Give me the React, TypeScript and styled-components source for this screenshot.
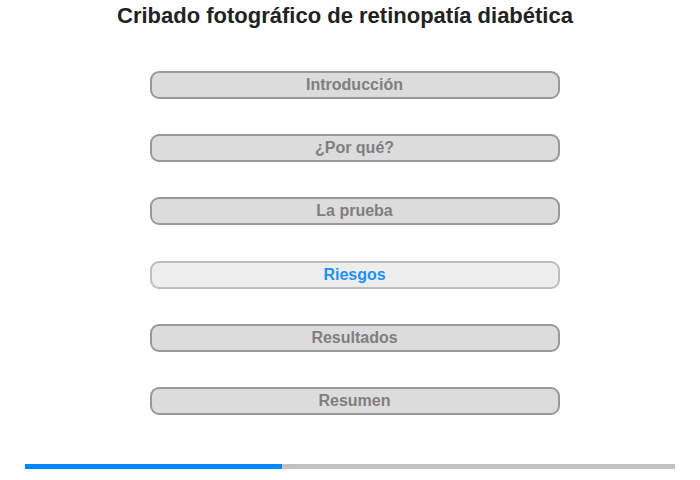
import React from "react";
import styled, { createGlobalStyle } from "styled-components";

const Global = createGlobalStyle`
  body {
    margin: 0;
    background: #fff;
    font-family: "Liberation Sans", Arial, sans-serif;
  }
`;

const Page = styled.div`
  width: 700px;
  height: 480px;
  display: flex;
  flex-direction: column;
`;

const Title = styled.h1`
  margin: 3px 0 0;
  padding-right: 10px;
  text-align: center;
  font-size: 22px;
  font-weight: bold;
  line-height: 26px;
  color: #222;
`;

const Menu = styled.div`
  display: flex;
  flex-direction: column;
  align-items: center;
  gap: 35.2px;
  margin-top: 42px;
  padding-left: 9px;
`;

const Item = styled.div<{ $active?: boolean }>`
  box-sizing: border-box;
  width: 410px;
  height: 28px;
  border: 2px solid ${(p) => (p.$active ? "#bdbdbd" : "#999")};
  border-radius: 9px;
  background: ${(p) => (p.$active ? "#ededed" : "#dcdcdc")};
  color: ${(p) => (p.$active ? "#1e90ff" : "#7f7f7f")};
  font-size: 16px;
  font-weight: bold;
  line-height: 24px;
  text-align: center;
`;

const Progress = styled.div`
  margin: 49px 25px 0;
  height: 5px;
  background: #c2c2c2;
`;

const Fill = styled.div`
  height: 100%;
  background: #0088ff;
`;

const items = [
  "Introducción",
  "¿Por qué?",
  "La prueba",
  "Riesgos",
  "Resultados",
  "Resumen",
];

export default function App() {
  const active = 3;
  const done = 257 / 650;
  return (
    <Page>
      <Global />
      <Title>Cribado fotográfico de retinopatía diabética</Title>
      <Menu>
        {items.map((label, i) => (
          <Item key={label} $active={i === active}>
            {label}
          </Item>
        ))}
      </Menu>
      <Progress>
        <Fill style={{ width: `${done * 100}%` }} />
      </Progress>
    </Page>
  );
}
